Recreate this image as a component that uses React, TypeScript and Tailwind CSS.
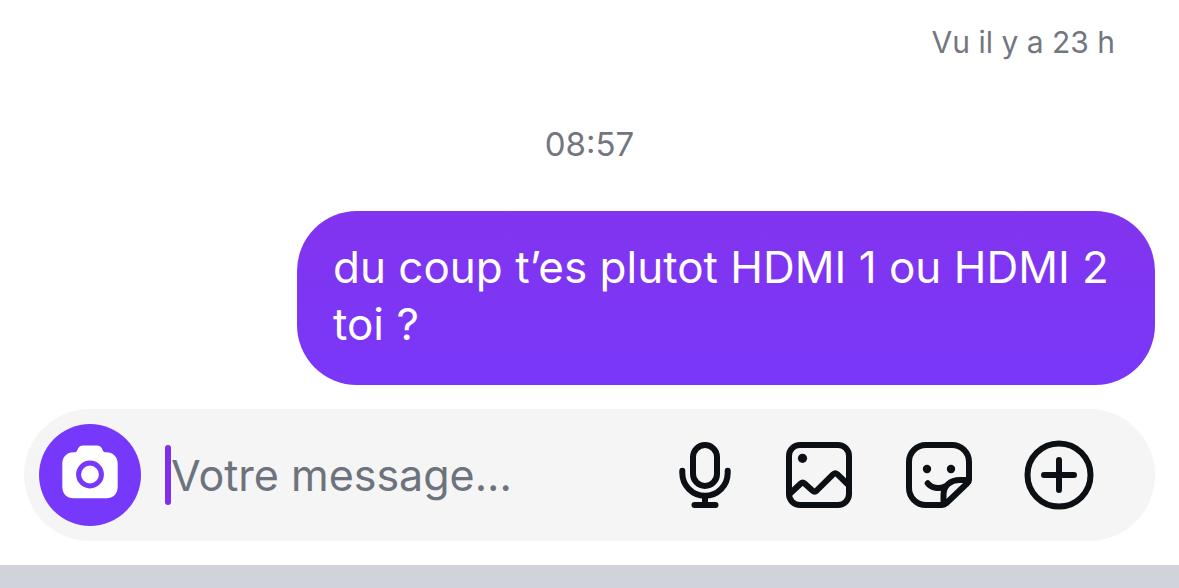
import React, { useState } from 'react'

const CameraIcon: React.FC = () => (
  <svg viewBox="0 0 60 60" className="w-15 h-15" fill="none" aria-hidden="true">
    <path
      fill="white"
      d="M23.5 0.5h13c3.2 0 5.2 1.6 6 4.2.6 1.900 1.700 2.600 3.600 2.600 7 0 11.600 4.500 11.600 11.500v23c0 7-4.500 11.500-11.500 11.500H13.800c-7 0-11.500-4.500-11.500-11.500v-23c0-7 4.600-11.500 11.600-11.500 1.900 0 3-.7 3.600-2.600.8-2.600 2.800-4.200 6-4.200z"
    />
    <circle cx="30" cy="29.5" r="11.4" stroke="#7638fa" strokeWidth="5" />
  </svg>
)

const MicIcon: React.FC = () => (
  <svg viewBox="0 0 60 72" className="w-15 h-18" fill="none" stroke="currentColor" strokeWidth="6" strokeLinecap="round" aria-hidden="true">
    <rect x="18" y="6" width="24" height="41" rx="12" />
    <path d="M7.3 31.7v2.3a22.7 22.7 0 0 0 45.4 0v-2.3" />
    <path d="M30 57v9" />
    <path d="M19.5 66h21" />
  </svg>
)

const PhotoIcon: React.FC = () => (
  <svg viewBox="0 0 72 72" className="w-18 h-18" fill="none" stroke="currentColor" strokeWidth="6" strokeLinejoin="round" aria-hidden="true">
    <rect x="6" y="6" width="60" height="60" rx="11" />
    <circle cx="19.5" cy="19.3" r="4.6" fill="currentColor" stroke="none" />
    <path d="M6 55.5L17.800 44.500q1.900-1.700 3.800 0L29.600 51.700q2 1.800 4 0L50.300 35.200q2-1.800 4 0L66 46.500" />
  </svg>
)

const StickerIcon: React.FC = () => (
  <svg viewBox="0 0 72 72" className="w-18 h-18" fill="none" stroke="currentColor" strokeWidth="6" strokeLinecap="round" strokeLinejoin="round" aria-hidden="true">
    <path d="M66 41V23A17 17 0 0 0 49 6H23A17 17 0 0 0 6 23v26a17 17 0 0 0 17 17h16q2.500 0 4-1.500L64.500 44Q66 42.500 66 41z" />
    <path d="M40.500 65V56C40.500 47 47 41 57 41h8" />
    <path d="M24.700 44.300C28.500 49 36 50.500 42 47.500" />
    <circle cx="24" cy="30" r="4.2" fill="currentColor" stroke="none" />
    <circle cx="48" cy="30" r="4.2" fill="currentColor" stroke="none" />
  </svg>
)

const PlusIcon: React.FC = () => (
  <svg viewBox="0 0 72 72" className="w-18 h-18" fill="none" stroke="currentColor" strokeWidth="6" strokeLinecap="round" aria-hidden="true">
    <circle cx="36" cy="36" r="31.5" />
    <path d="M36 21v30M21 36h30" />
  </svg>
)

const actions = [
  { label: 'Message vocal', Icon: MicIcon },
  { label: 'Photo', Icon: PhotoIcon },
  { label: 'Sticker', Icon: StickerIcon },
  { label: 'Plus', Icon: PlusIcon },
]

const App: React.FC = () => {
  const [message, setMessage] = useState('')

  return (
    <div className="min-h-screen flex flex-col bg-white font-[Inter,sans-serif]">
      <main className="flex flex-col px-6 pt-6">
        <p className="self-end mr-10 text-[30px] leading-9 text-[#73767f]">Vu il y a 23 h</p>
        <time className="self-center mt-16 text-[33px] leading-10 text-[#73767f]">08:57</time>
        <div className="self-end mt-[47px] max-w-[858px] rounded-[60px] px-9 pt-7 pb-8 bg-linear-to-b from-[#8234ef] to-[#7937f8]">
          <p className="text-[44px] leading-[57px] text-white">du coup t’es plutot HDMI 1 ou HDMI 2 toi ?</p>
        </div>
      </main>

      <form
        onSubmit={(e) => e.preventDefault()}
        className="flex items-center m-6 py-[15px] pl-[15px] pr-15 rounded-full bg-[#f5f5f5]"
      >
        <button
          type="button"
          aria-label="Appareil photo"
          className="shrink-0 flex items-center justify-center w-[102px] h-[102px] rounded-full bg-[#7638fa]"
        >
          <CameraIcon />
        </button>
        <span className="shrink-0 ml-6 w-1.5 h-15 rounded-full bg-[#812fe8]" />
        <input
          type="text"
          aria-label="Votre message"
          placeholder="Votre message..."
          value={message}
          onChange={(e) => setMessage(e.target.value)}
          className="flex-1 min-w-0 h-15 text-[43px] text-[#0c1014] placeholder:text-[#6c737c] placeholder:opacity-100 caret-[#812fe8] outline-none"
        />
        <div className="shrink-0 flex items-center gap-12 text-[#0c1014]">
          {actions.map(({ label, Icon }) => (
            <button key={label} type="button" aria-label={label}>
              <Icon />
            </button>
          ))}
        </div>
      </form>

      <div className="flex-1 bg-[#d0d3da]" />
    </div>
  )
}

export default App
